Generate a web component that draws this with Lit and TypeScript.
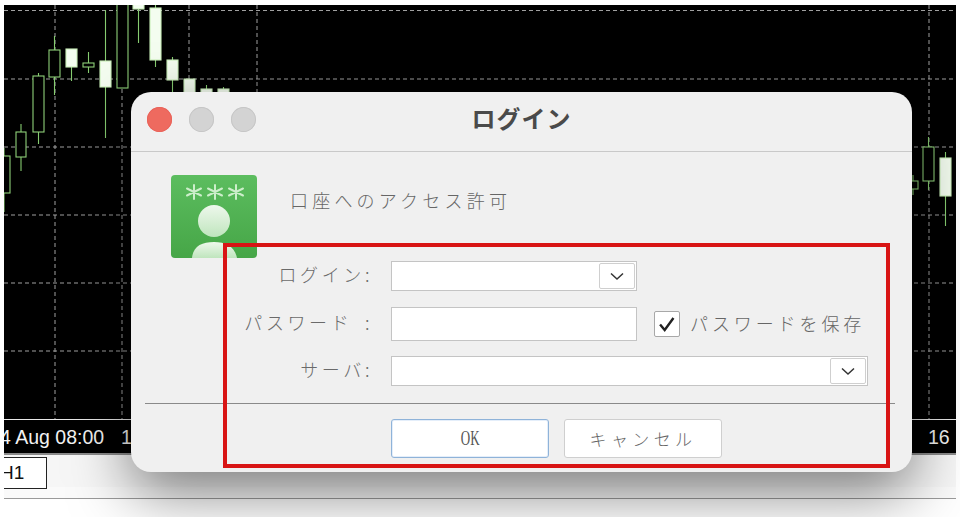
import { LitElement, html, css, svg } from "lit";
import { customElement } from "lit/decorators.js";

type Candle = [x: number, w: number, top: number, bot: number, wt: number, wb: number, filled: boolean];

const CANDLES: Candle[] = [
  [-2, 12, 156, 193, 148, 212, false],
  [16, 10, 132, 157, 124, 171, false],
  [33, 11, 76, 132, 73, 144, false],
  [49, 11, 50, 77, 36, 95, false],
  [66, 11, 49, 67, 49, 81, true],
  [83, 11, 63, 67, 52, 73, false],
  [100, 11, 61, 87, 10, 138, true],
  [117, 11, 0, 88, 0, 88, false],
  [133, 11, 0, 9, 0, 43, true],
  [150, 11, 8, 60, 5, 67, true],
  [167, 11, 60, 80, 57, 100, true],
  [184, 11, 79, 100, 79, 120, true],
  [201, 11, 89, 95, 85, 110, true],
  [218, 11, 89, 95, 87, 110, true],
  [908, 10, 181, 189, 175, 195, false],
  [923, 11, 147, 181, 137, 190, false],
  [940, 11, 158, 196, 152, 226, true],
];
const HLINES = [10.5, 79, 147, 215, 283, 351];
const VLINES = [55, 122, 189, 257, 929];
const TICKS: [number, string][] = [[0, "4 Aug 08:00"], [121, "1"], [928, "16"]];

@customElement("app-root")
export class AppRoot extends LitElement {
  static styles = css`
    :host { display: block; width: 960px; height: 517px; background: #fff; overflow: hidden; position: relative;
      font-family: "Noto Sans CJK JP", "Liberation Sans", sans-serif; }
    .terminal { padding: 5px 4px 0; display: flex; flex-direction: column; }
    .chart { display: block; width: 952px; height: 414px; background: #000; }
    .grid { stroke: #a0a0a0; stroke-width: 1; stroke-dasharray: 4 3; fill: none; }
    .wick { stroke: #86cc70; stroke-width: 1.1; }
    .body { stroke: #8ed078; stroke-width: 1.1; fill: #000; }
    .body.filled { fill: #f4fdf0; stroke: #c9eeb9; }
    .axis { height: 33px; background: #000; border-top: 1px solid #e8e8e8; position: relative; overflow: hidden;
      color: #f2f2f2; font: 19.5px/34px "Liberation Sans", sans-serif; }
    .tick { position: absolute; top: 0; white-space: pre; }
    .axis-end { height: 2px; background: #8a8a8a; }
    .strip { height: 44px; border-bottom: 1px solid #9a9a9a; background: linear-gradient(#f6f6f6 0 74%, #fafafa 74%); display: flex; align-items: flex-start; padding-top: 2px; box-sizing: border-box; }
    .tab { width: 43px; height: 32px; box-sizing: border-box; background: #fff; border: 1px solid #222; border-left: none;
      font: 19px/30px "Liberation Sans", sans-serif; color: #111; overflow: hidden; text-indent: -4px; }

    .dialog { position: absolute; left: 131px; top: 92px; width: 781px; height: 380px; box-sizing: border-box;
      background: #f0f0f0; border-radius: 20px; box-shadow: 0 20px 60px rgba(0, 0, 0, .5); display: flex; flex-direction: column; }
    .titlebar { height: 60px; flex: none; box-sizing: border-box; border-bottom: 1px solid #c9c9c9; position: relative;
      display: flex; align-items: center; justify-content: center; }
    .lights { position: absolute; left: 16px; top: 15px; display: flex; gap: 17px; }
    .light { width: 25px; height: 25px; border-radius: 50%; background: #d3d3d3; box-shadow: inset 0 0 0 1px #c6c6c6; }
    .light.close { background: #ee6a5f; box-shadow: inset 0 0 0 1px #e9635a; }
    .title { font-size: 24px; font-weight: 700; color: #4a4a4a; letter-spacing: 1px; line-height: 1; margin-top: -8px; }
    .intro { display: flex; align-items: flex-start; margin: 23px 0 0 40px; height: 83px; }
    .icon { width: 86px; height: 83px; flex: none; display: block; }
    .intro-text { margin: 12px 0 0 33px; font-size: 18px; line-height: 26px; letter-spacing: 4.2px; color: #666; font-weight: 300; white-space: nowrap; }
    .form { display: flex; flex-direction: column; margin-top: 3px; }
    .row { display: flex; align-items: center; }
    .row + .row { margin-top: 16px; }
    .row.third { margin-top: 15px; }
    .label { width: 242px; margin-right: 18px; padding-bottom: 4px; text-align: right; flex: none; font-size: 18px; line-height: 24px; letter-spacing: 3.6px; word-spacing: 5px; color: #6a6a6a; font-weight: 300; white-space: pre; }
    .input { box-sizing: border-box; background: #fff; border: 1px solid #c4c4c4; display: flex; align-items: center; justify-content: flex-end; padding-right: 1px; }
    .w246 { width: 246px; }
    .h30 { height: 30px; }
    .h34 { height: 34px; }
    .w477 { width: 477px; }
    .drop { width: 36px; height: 26px; box-sizing: border-box; border: 1px solid #cfcfcf; border-radius: 2px; background: #fff; display: flex; align-items: center; justify-content: center; }
    .drop svg { display: block; }
    .save { display: flex; align-items: center; margin-left: 17px; }
    .check { width: 26px; height: 26px; box-sizing: border-box; background: #fff; border: 1px solid #a8a8a8; border-radius: 2px; display: block; }
    .save-text { margin-left: 10px; padding-bottom: 2px; font-size: 18px; letter-spacing: 3.9px; color: #666; font-weight: 300; white-space: nowrap; }
    hr { margin: 17px 17px 0 14px; border: none; height: 1px; background: #8a8a8a; flex: none; }
    .buttons { display: flex; gap: 15px; margin: 15px 0 0 260px; }
    .btn { width: 158px; height: 39px; box-sizing: border-box; background: #fff; border: 1px solid #cfcfcf; border-radius: 3px;
      display: flex; align-items: center; justify-content: center; font-size: 17px; letter-spacing: 4.4px; color: #666; font-weight: 300; }
    .btn.ok { border-color: #8fb3d9; box-shadow: inset 0 0 0 1px #e4eefa; }
    .ok-text { font: 21px "Liberation Serif", serif; letter-spacing: 0; color: #555; display: inline-block; transform: scaleX(.62); }

    .highlight { position: absolute; left: 223px; top: 243px; width: 667px; height: 225px; box-sizing: border-box; border: 4px solid #d81414; pointer-events: none; }
  `;

  private chart() {
    return svg`<svg class="chart" viewBox="4 5 952 414" xmlns="http://www.w3.org/2000/svg">
      ${HLINES.map((y) => svg`<line class="grid" x1="4" x2="956" y1=${y} y2=${y}></line>`)}
      ${VLINES.map((x) => svg`<line class="grid" x1=${x} x2=${x} y1="5" y2="419"></line>`)}
      ${CANDLES.map(([x, w, t, b, wt, wb, f]) => svg`
        <line class="wick" x1=${x + w / 2} x2=${x + w / 2} y1=${wt} y2=${wb}></line>
        <rect class=${f ? "body filled" : "body"} x=${x} y=${t} width=${w} height=${b - t}></rect>`)}
    </svg>`;
  }

  private icon() {
    return html`<svg class="icon" viewBox="0 0 86 83" xmlns="http://www.w3.org/2000/svg">
      <defs>
        <linearGradient id="ig" x1="0" y1="0" x2="0" y2="1"><stop offset="0" stop-color="#5cbd5f"/><stop offset="1" stop-color="#46a647"/></linearGradient>
        <linearGradient id="ih" x1="0" y1="0" x2="0" y2="1"><stop offset="0" stop-color="#eef8ec"/><stop offset="1" stop-color="#bfe5bd"/></linearGradient>
      </defs>
      <rect width="86" height="83" rx="4" fill="url(#ig)"/>
      <g stroke="#cdeecb" stroke-width="2" stroke-linecap="round">
        ${[23, 44, 65].map((cx) => svg`<path d="M${cx} 10v14M${cx - 7} 13.5l14 7M${cx - 7} 20.5l14-7"/>`)}
      </g>
      <circle cx="43" cy="46" r="16" fill="url(#ih)"/>
      <path d="M21 83c1-12 10-16 22-16s21 5 23 16z" fill="url(#ih)"/>
    </svg>`;
  }

  private chevron() {
    return html`<svg width="14" height="9" viewBox="0 0 14 9"><path d="M1 1.5l6 5.5 6-5.5" fill="none" stroke="#333" stroke-width="1.5"/></svg>`;
  }

  render() {
    return html`
      <div class="terminal">
        ${this.chart()}
        <div class="axis">${TICKS.map(([x, t]) => html`<span class="tick" style="left:${x - 4}px">${t}</span>`)}</div>
        <div class="axis-end"></div>
        <div class="strip"><div class="tab">H1</div></div>
      </div>
      <div class="dialog">
        <div class="titlebar">
          <div class="lights"><span class="light close"></span><span class="light"></span><span class="light"></span></div>
          <div class="title">ログイン</div>
        </div>
        <div class="intro">${this.icon()}<div class="intro-text">口座へのアクセス許可</div></div>
        <div class="form">
          <div class="row">
            <div class="label">ログイン:</div>
            <div class="input w246 h30"><div class="drop">${this.chevron()}</div></div>
          </div>
          <div class="row">
            <div class="label">パスワード :</div>
            <div class="input w246 h34"></div>
            <div class="save">
              <svg class="check" viewBox="0 0 26 26"><path d="M5.500 13.500l5 6 9.500-13" fill="none" stroke="#222" stroke-width="2.600"/></svg>
              <div class="save-text">パスワードを保存</div>
            </div>
          </div>
          <div class="row third">
            <div class="label">サーバ:</div>
            <div class="input w477 h30"><div class="drop">${this.chevron()}</div></div>
          </div>
        </div>
        <hr />
        <div class="buttons">
          <div class="btn ok"><span class="ok-text">OK</span></div>
          <div class="btn">キャンセル</div>
        </div>
      </div>
      <div class="highlight"></div>
    `;
  }
}
